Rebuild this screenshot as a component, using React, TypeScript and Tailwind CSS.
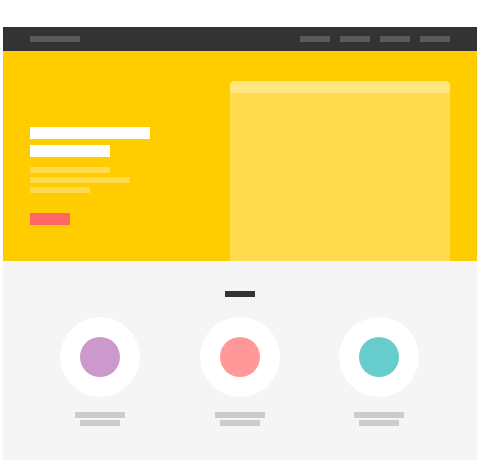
const navLinks = ["Home", "About", "Work", "Contact"];

const features = [
  { name: "Purple", color: "bg-[#cc99cc]" },
  { name: "Pink", color: "bg-[#ff9999]" },
  { name: "Teal", color: "bg-[#66cccc]" },
];

function NavBar() {
  return (
    <header className="flex h-6 items-center justify-between bg-[#333333] px-[27px]">
      <a href="#home" aria-label="Logo" className="block h-1.5 w-[50px] bg-[#5a5a5a]" />
      <nav className="flex gap-2.5">
        {navLinks.map((label) => (
          <a
            key={label}
            href={"#" + label.toLowerCase()}
            aria-label={label}
            className="block h-1.5 w-[30px] bg-[#5a5a5a]"
          />
        ))}
      </nav>
    </header>
  );
}

function Hero() {
  return (
    <section className="flex items-end justify-between bg-[#ffcc00] px-[27px] pt-[30px]">
      <div className="pb-9">
        <div className="space-y-1.5">
          <div className="h-3 w-[120px] bg-white" />
          <div className="h-3 w-20 bg-white" />
        </div>
        <div className="mt-2.5 space-y-1">
          <div className="h-1.5 w-20 bg-white/30" />
          <div className="h-1.5 w-[100px] bg-white/30" />
          <div className="h-1.5 w-[60px] bg-white/30" />
        </div>
        <button
          type="button"
          aria-label="Get started"
          className="mt-5 block h-3 w-10 bg-[#ff6666]"
        />
      </div>
      <div className="h-[180px] w-[220px] overflow-hidden rounded-t-[5px] bg-[#ffdb4d]">
        <div className="h-3 bg-[#ffe680]" />
      </div>
    </section>
  );
}

function Features() {
  return (
    <section className="bg-[#f5f5f5] pt-[30px] pb-[34px]">
      <div className="mx-auto h-1.5 w-[30px] bg-[#333333]" />
      <ul className="mt-5 grid grid-cols-[70fr_70fr_69fr] pr-[29px] pl-[27px]">
        {features.map((feature) => (
          <li key={feature.name} className="flex flex-col items-center">
            <div className="flex size-20 items-center justify-center rounded-full bg-white">
              <div className={"size-10 rounded-full " + feature.color} />
            </div>
            <div className="mt-[15px] h-1.5 w-[50px] bg-[#cccccc]" />
            <div className="mt-0.5 h-1.5 w-10 bg-[#cccccc]" />
          </li>
        ))}
      </ul>
    </section>
  );
}

export default function App() {
  return (
    <div className="bg-white px-[3px] pt-[27px] font-['Liberation_Sans',sans-serif]">
      <NavBar />
      <main>
        <Hero />
        <Features />
      </main>
    </div>
  );
}
